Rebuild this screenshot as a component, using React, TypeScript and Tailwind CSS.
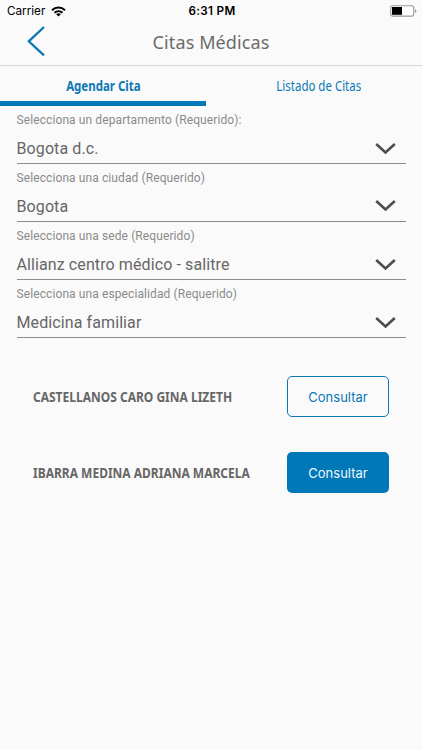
import React from "react";

const fields = [
  { label: "Selecciona un departamento (Requerido):", value: "Bogota d.c.", lift: false },
  { label: "Selecciona una ciudad (Requerido)", value: "Bogota", lift: true },
  { label: "Selecciona una sede (Requerido)", value: "Allianz centro médico - salitre", lift: false },
  { label: "Selecciona una especialidad (Requerido)", value: "Medicina familiar", lift: false },
];

function StatusBar() {
  return (
    <div className="grid h-[22px] grid-cols-3 items-center pl-[7px] pr-[5px] font-['Inter',sans-serif] text-black">
      <div className="flex items-center gap-[6px]">
        <span className="text-[11.7px] leading-[22px]">Carrier</span>
        <svg width="15" height="11" viewBox="0 0 15 11" fill="none" stroke="#000" strokeWidth="2">
          <path d="M1 4.2C4.7.6 10.3.6 14 4.2" />
          <path d="M3.5 6.8C5.8 4.6 9.2 4.6 11.5 6.8" />
          <path d="M7.5 10.5 5.2 8.2Q7.5 6.3 9.8 8.2Z" fill="#000" stroke="none" />
        </svg>
      </div>
      <span className="text-center text-[11.7px] font-semibold leading-[22px] tracking-[0.3px]">6:31 PM</span>
      <svg className="justify-self-end" width="27" height="12" viewBox="0 0 27 12">
        <rect x="0.7" y="0.7" width="23" height="10.4" rx="2.2" fill="#fff" stroke="#999" strokeWidth="1.1" />
        <rect x="2" y="2" width="10" height="7.8" fill="#000" />
        <path d="M25 4v4q1.4-.5 1.4-2T25 4Z" fill="#999" />
      </svg>
    </div>
  );
}

function Header() {
  return (
    <header className="grid h-[44px] grid-cols-[60px_1fr_60px] items-center border-b border-[#d9d9d9]">
      <svg className="mb-[6px] ml-[26px]" width="20" height="32" viewBox="0 0 20 32" fill="none" stroke="#0b78b5" strokeWidth="2.3">
        <path d="M18 2 2.8 16.3 18 30.3" />
      </svg>
      <h1 className="pb-[3px] text-center font-['Noto_Sans',sans-serif] text-[18px] leading-[40px] tracking-[0.1px] text-[#6b6b6b]">
        Citas Médicas
      </h1>
    </header>
  );
}

function Tabs() {
  return (
    <nav className="flex h-[40px] font-['Noto_Sans',sans-serif] text-[14px] leading-[40px] text-[#0b78b5]">
      <button className="w-[206px] border-b-[5px] border-[#0077b6] font-bold">
        <span className="inline-block scale-x-[0.82]">Agendar Cita</span>
      </button>
      <button className="flex-1 pl-[10px]">
        <span className="inline-block scale-x-[0.82]">Listado de Citas</span>
      </button>
    </nav>
  );
}

function Field({ label, value, lift }: { label: string; value: string; lift: boolean }) {
  return (
    <div className="h-[58px] border-b border-[#8c8c8c] pt-[6px] font-['Roboto',sans-serif]">
      <div className="h-[16px] text-[12px] leading-[17px] tracking-[0.1px] text-[#8a8a8a]">{label}</div>
      <div className="flex h-[35px] items-center justify-between pr-[10px] pt-[5px]">
        <span className="pt-[2px] text-[16px] leading-[20px] tracking-[0.1px] text-[#666]">{value}</span>
        <svg className={lift ? "mb-[2px]" : "mt-[1px]"} width="21" height="13" viewBox="0 0 21 13" fill="none" stroke="#4d4d4d" strokeWidth="2.6">
          <path d="m1.2 2 9.3 8.4L19.8 2" />
        </svg>
      </div>
    </div>
  );
}

export default function App() {
  return (
    <main className="h-[750px] w-[422px] overflow-hidden bg-[#fafafa]">
      <StatusBar />
      <Header />
      <Tabs />
      <section className="mx-[16.5px]">
        {fields.map((field) => (
          <Field key={field.label} {...field} />
        ))}
      </section>
      <section className="flex flex-col gap-[35px] px-[33px] pt-[38px]">
        <div className="flex h-[41px] items-center justify-between">
          <span className="origin-left scale-x-[0.857] whitespace-nowrap font-['Noto_Sans',sans-serif] text-[14px] font-bold text-[#666]">CASTELLANOS CARO GINA LIZETH</span>
          <button className="h-[41px] w-[102px] shrink-0 rounded-[5px] border border-[#0b78b5] pt-[2px] font-['Inter',sans-serif] text-[13px] text-[#0b78b5]">Consultar</button>
        </div>
        <div className="flex h-[41px] items-center justify-between">
          <span className="origin-left scale-x-[0.857] whitespace-nowrap font-['Noto_Sans',sans-serif] text-[14px] font-bold text-[#666]">IBARRA MEDINA ADRIANA MARCELA</span>
          <button className="h-[41px] w-[102px] shrink-0 rounded-[5px] bg-[#0077b6] pt-[2px] font-['Inter',sans-serif] text-[13px] text-[#eef8ff]">Consultar</button>
        </div>
      </section>
    </main>
  );
}
